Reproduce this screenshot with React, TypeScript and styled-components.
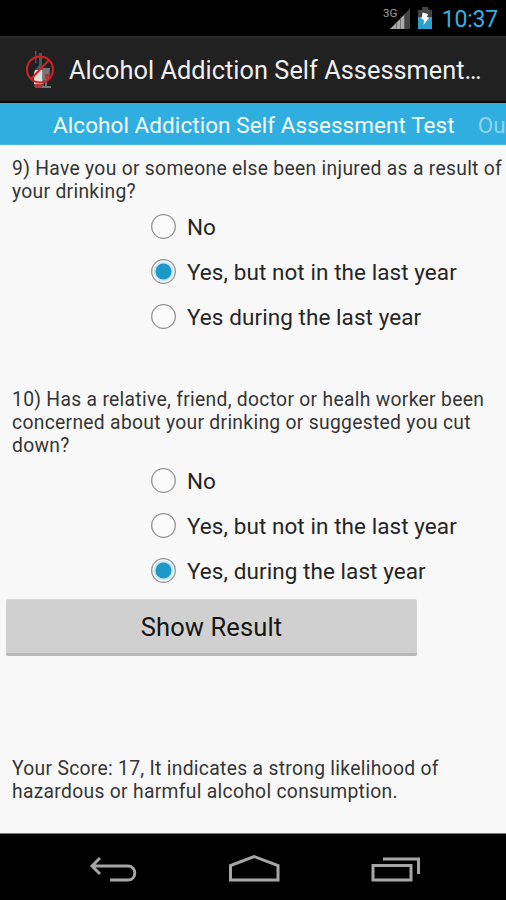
import React from 'react';
import styled, { createGlobalStyle } from 'styled-components';

const GlobalStyle = createGlobalStyle`
  * { box-sizing: border-box; }
  body { margin: 0; background: #f8f8f8; font-family: Roboto, "Noto Sans", sans-serif; }
`;

const Screen = styled.div`
  width: 506px;
  height: 900px;
  display: flex;
  flex-direction: column;
  overflow: hidden;
  background: #f8f8f8;
  white-space: nowrap;
`;

const StatusBar = styled.header`
  height: 36px;
  flex: none;
  display: flex;
  align-items: center;
  justify-content: flex-end;
  padding-right: 8px;
  background: #000;
`;

const StatusIcons = styled.svg`
  width: 52px;
  height: 36px;
  margin-right: 7px;
`;

const Clock = styled.time`
  color: #35b0e0;
  font-size: 23px;
  line-height: 36px;
  letter-spacing: -0.2px;
  padding-top: 3px;
`;

const ActionBar = styled.div`
  height: 67px;
  flex: none;
  display: flex;
  align-items: center;
  padding-left: 23px;
  background: #212121;
  border-top: 2px solid #292929;
  border-bottom: 2px solid #100a0c;
`;

const AppIcon = styled.svg`
  width: 34px;
  height: 42px;
  margin-right: 12px;
`;

const Title = styled.h1`
  margin: 2px 0 0;
  color: #f0f0f0;
  font-size: 25.3px;
  font-weight: 400;
  line-height: 32px;
  letter-spacing: 0.04px;
`;

const TabStrip = styled.nav`
  height: 42px;
  flex: none;
  display: flex;
  align-items: center;
  gap: 23px;
  padding-left: 53px;
  overflow: hidden;
  background: #30aee0;
  border-bottom: 1px solid #4cb9e4;
`;

const Tab = styled.span<{ $active?: boolean }>`
  color: ${({ $active }) => ($active ? '#f4fbfe' : '#93d4ef')};
  font-size: 22.5px;
  line-height: 28px;
  letter-spacing: 0.07px;
  padding-top: 3px;
`;

const Content = styled.main`
  flex: 1;
  display: flex;
  flex-direction: column;
`;

const Paragraph = styled.p<{ $top: number }>`
  margin: ${({ $top }) => $top}px 0 0 12px;
  color: #353535;
  font-size: 19.3px;
  line-height: 23.3px;
  letter-spacing: 0.3px;
`;

const Options = styled.div`
  display: grid;
  grid-auto-rows: 45px;
  padding-left: 150px;
`;

const Option = styled.label`
  display: flex;
  align-items: center;
  gap: 10px;
`;

const Radio = styled.svg`
  width: 27px;
  height: 27px;
  flex: none;
`;

const OptionText = styled.span`
  color: #252525;
  font-size: 22.5px;
  line-height: 28px;
  letter-spacing: 0.07px;
  padding-top: 1px;
`;

const ResultButton = styled.button`
  width: 411px;
  height: 57px;
  margin: 6.2px 0 0 6px;
  padding: 2px 0 0;
  border: 0;
  border-top: 1px solid #dadada;
  border-bottom: 3px solid #b9b9b9;
  border-radius: 2px;
  background: #d0d0d0;
  color: #151515;
  font: 400 25.5px/32px Roboto, sans-serif;
  letter-spacing: 0.1px;
`;

const NavBar = styled.footer`
  height: 67px;
  flex: none;
  display: flex;
  justify-content: space-between;
  padding: 0 84px 0 87px;
  background: #000;
  border-top: 1px solid #777;
`;

const NavIcon = styled.svg`
  width: 54px;
  height: 66px;
  fill: none;
  stroke: #a6a6a6;
  stroke-width: 3;
`;

const RadioOption = ({ text, checked }: { text: string; checked?: boolean }) => (
  <Option>
    <Radio viewBox="0 0 27 27">
      <circle cx="13.5" cy="13.5" r="11.8" fill="#fbfbfb" stroke="#929292" strokeWidth="1.3" />
      {checked && <circle cx="13.5" cy="13.5" r="9" fill="#1c99c7" stroke="#c5e9f6" strokeWidth="2" />}
    </Radio>
    <OptionText>{text}</OptionText>
  </Option>
);

export default function App() {
  return (
    <Screen>
      <GlobalStyle />
      <StatusBar>
        <StatusIcons viewBox="0 0 52 36">
          <text x="0" y="16.5" fill="#a0a0a0" fontFamily="Roboto" fontSize="11.5" fontWeight="400">3G</text>
          <path d="M7 29 21 15v14z" fill="#aaa" />
          <path d="M21 15 27 8v21h-6z" fill="#444" />
          <path d="M13.5 22v7M17.5 18v11M21.5 14v15" stroke="#666" strokeWidth=".8" />
          <path d="M35 10h4V7h6v3h4v7H35z" fill="#444" />
          <path d="M35 17h14v12H35z" fill="#2ba0cb" />
          <path d="M39.5 12.5 45 14l-1 3 2 1-5.5 7 .5-5-2.5-1z" fill="#fff" />
        </StatusIcons>
        <Clock>10:37</Clock>
      </StatusBar>
      <ActionBar>
        <AppIcon viewBox="0 0 34 42">
          <path d="M12 2h1.4v12H12zM16 4h3v12l2 4v18H11V22l5-6z" fill="#555" />
          <path d="M12.5 21h7v14H11V24z" fill="#ddd" />
          <path d="M20 19h7l-1 11-2 2v5h4v2h-9v-2h3v-5l-3-3z" fill="#777" />
          <path d="M22 25h5l-2 5h-3zM12 35h7v4h-7z" fill="#b73336" />
          <circle cx="17" cy="20.5" r="13" fill="none" stroke="#d51f27" strokeWidth="2" />
          <path d="M8 30 26 11" stroke="#d51f27" strokeWidth="2" />
        </AppIcon>
        <Title>Alcohol Addiction Self Assessment…</Title>
      </ActionBar>
      <TabStrip>
        <Tab $active>Alcohol Addiction Self Assessment Test</Tab>
        <Tab>Ou</Tab>
      </TabStrip>
      <Content>
        <Paragraph $top={12}>
          9) Have you or someone else been injured as a result of<br />your drinking?
        </Paragraph>
        <Options>
          <RadioOption text="No" />
          <RadioOption text="Yes, but not in the last year" checked />
          <RadioOption text="Yes during the last year" />
        </Options>
        <Paragraph $top={49.3}>
          10) Has a relative, friend, doctor or healh worker been<br />concerned about your drinking or suggested you cut<br />down?
        </Paragraph>
        <Options>
          <RadioOption text="No" />
          <RadioOption text="Yes, but not in the last year" />
          <RadioOption text="Yes, during the last year" checked />
        </Options>
        <ResultButton>Show Result</ResultButton>
        <Paragraph $top={101}>
          Your Score: 17, It indicates a strong likelihood of<br />hazardous or harmful alcohol consumption.
        </Paragraph>
      </Content>
      <NavBar>
        <NavIcon viewBox="0 0 54 66">
          <path d="m13 24-8 8 8 8M5 32h36c9 0 9 14 0 14H23" />
        </NavIcon>
        <NavIcon viewBox="0 0 54 66">
          <path d="M2.5 46V31.5L26 22.5 50 31.5V46z" />
        </NavIcon>
        <NavIcon viewBox="0 0 54 66">
          <path d="M5 31.5h38V46H5zM15 25h35.5v15" />
        </NavIcon>
      </NavBar>
    </Screen>
  );
}
